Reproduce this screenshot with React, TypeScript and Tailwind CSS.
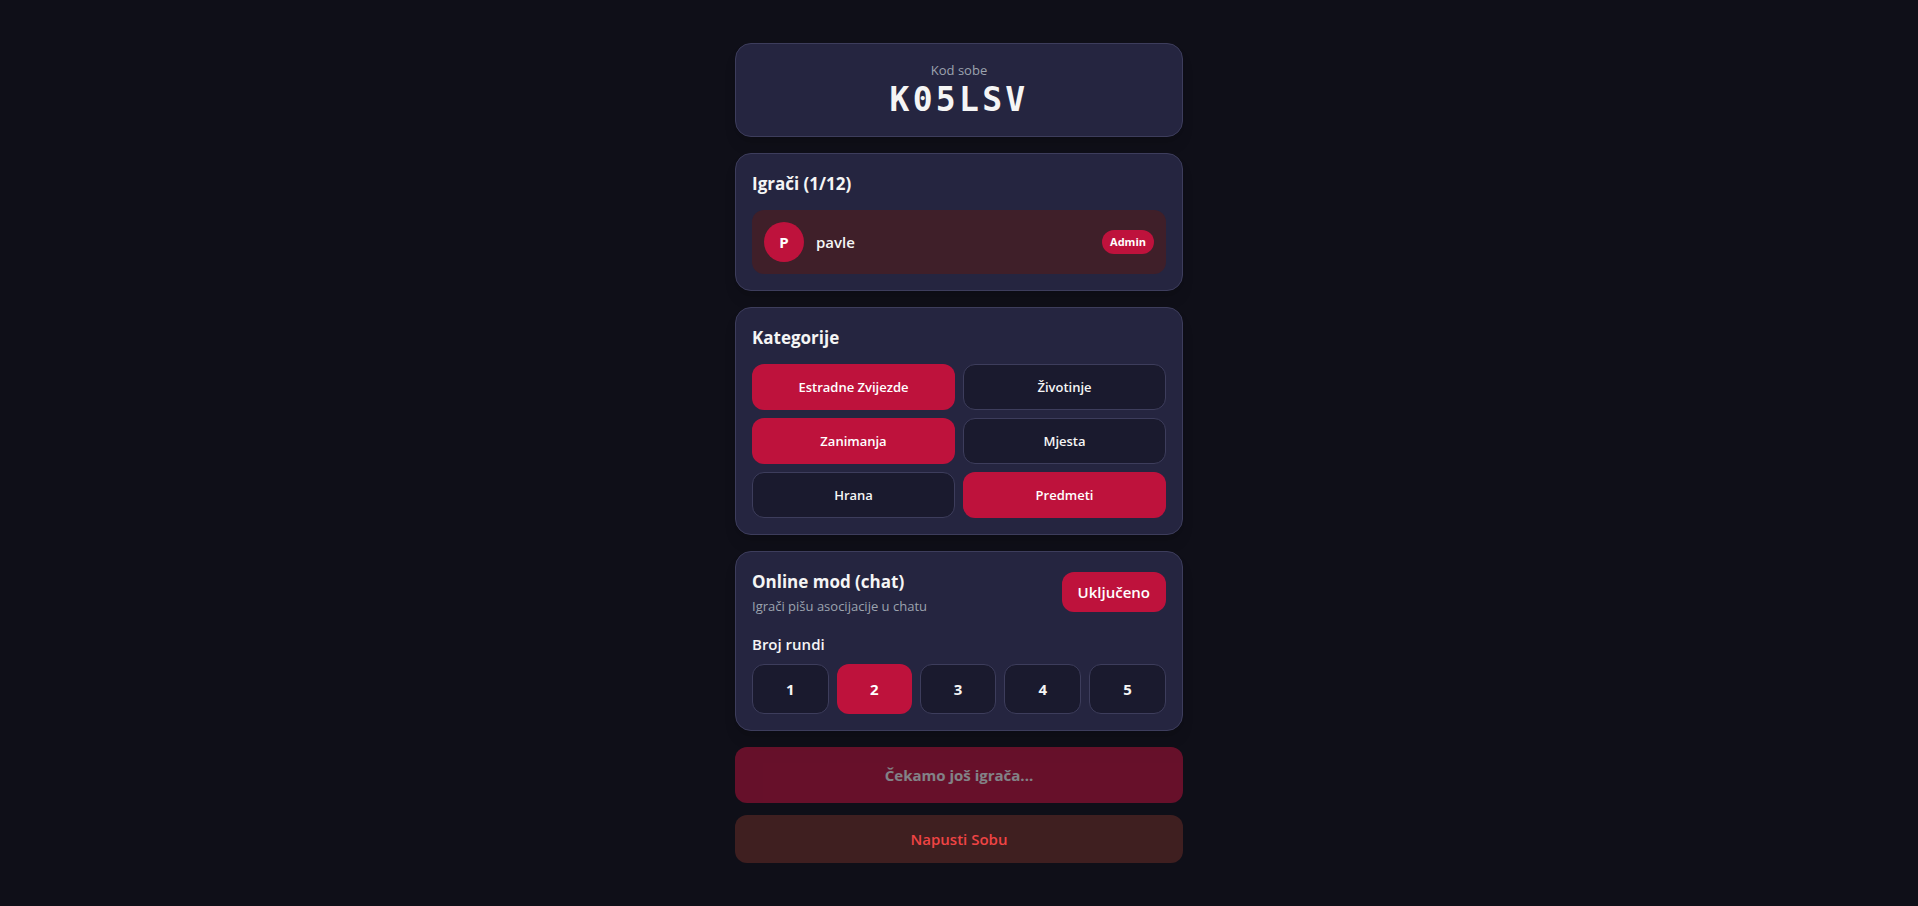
import React, { useState } from 'react';
import clsx from 'clsx';

interface CardProps {
  children: React.ReactNode;
  className?: string;
}

const Card: React.FC<CardProps> = ({ children, className }) => (
  <section className={clsx('rounded-2xl border border-[#3d3d5c] bg-[#252540] p-4 shadow-lg', className)}>{children}</section>
);

const categories = ['Estradne Zvijezde', 'Životinje', 'Zanimanja', 'Mjesta', 'Hrana', 'Predmeti'];
const roundOptions = [1, 2, 3, 4, 5];

const App: React.FC = () => {
  const [selected, setSelected] = useState(['Estradne Zvijezde', 'Zanimanja', 'Predmeti']);
  const [online, setOnline] = useState(true);
  const [rounds, setRounds] = useState(2);

  const toggleCategory = (name: string) => {
    setSelected(selected.includes(name) ? selected.filter((c) => c !== name) : [...selected, name]);
  };

  return (
    <main className="flex min-h-screen items-center justify-center bg-[#0f0f18] p-4 font-['Segoe_UI','Open_Sans',sans-serif] text-[15px] leading-6 text-[#f5f5f5]">
      <div className="flex w-full max-w-md flex-col gap-4">
        <Card className="text-center">
          <p className="text-[13px] leading-5 text-[#9ca3af]">Kod sobe</p>
          <h1 className="font-['Consolas','DejaVu_Sans_Mono',monospace] text-[33px] leading-10 font-bold tracking-widest">K05LSV</h1>
        </Card>

        <Card>
          <h2 className="mb-3 text-[17px] leading-7 font-bold">Igrači (1/12)</h2>
          <div className="flex items-center justify-between rounded-xl bg-[#3f1f29] p-3">
            <div className="flex items-center gap-3">
              <div className="flex size-10 items-center justify-center rounded-full bg-[#be123c] font-bold text-white">P</div>
              <span className="font-semibold">pavle</span>
            </div>
            <span className="rounded-full bg-[#be123c] px-2 py-1 text-[11px] leading-4 font-bold text-white">Admin</span>
          </div>
        </Card>

        <Card>
          <h2 className="mb-3 text-[17px] leading-7 font-bold">Kategorije</h2>
          <div className="grid grid-cols-2 gap-2">
            {categories.map((name) => (
              <button
                key={name}
                onClick={() => toggleCategory(name)}
                className={clsx(
                  'rounded-xl py-3 text-[13px] leading-5 font-semibold',
                  selected.includes(name) ? 'bg-[#be123c] text-white' : 'border border-[#3d3d5c] bg-[#1a1a2e]'
                )}
              >
                {name}
              </button>
            ))}
          </div>
        </Card>

        <Card>
          <div className="mb-4 flex items-center justify-between">
            <div>
              <h2 className="text-[17px] leading-7 font-bold">Online mod (chat)</h2>
              <p className="text-[13px] leading-5 text-[#9ca3af]">Igrači pišu asocijacije u chatu</p>
            </div>
            <button onClick={() => setOnline(!online)} className="rounded-xl bg-[#be123c] px-4 py-2 font-semibold text-white">
              {online ? 'Uključeno' : 'Isključeno'}
            </button>
          </div>
          <h3 className="mb-2 font-semibold">Broj rundi</h3>
          <div className="flex gap-2">
            {roundOptions.map((n) => (
              <button
                key={n}
                onClick={() => setRounds(n)}
                className={clsx(
                  'flex-1 rounded-xl py-3 font-bold',
                  n === rounds ? 'bg-[#be123c] text-white' : 'border border-[#3d3d5c] bg-[#1a1a2e]'
                )}
              >
                {n}
              </button>
            ))}
          </div>
        </Card>

        <div className="flex flex-col gap-3">
          <button disabled className="rounded-xl bg-[#be123c] py-4 font-bold opacity-50">
            Čekamo još igrača...
          </button>
          <button className="rounded-xl bg-[#3f1f20] py-3 font-semibold text-[#ef4444]">Napusti Sobu</button>
        </div>
      </div>
    </main>
  );
};

export default App;
